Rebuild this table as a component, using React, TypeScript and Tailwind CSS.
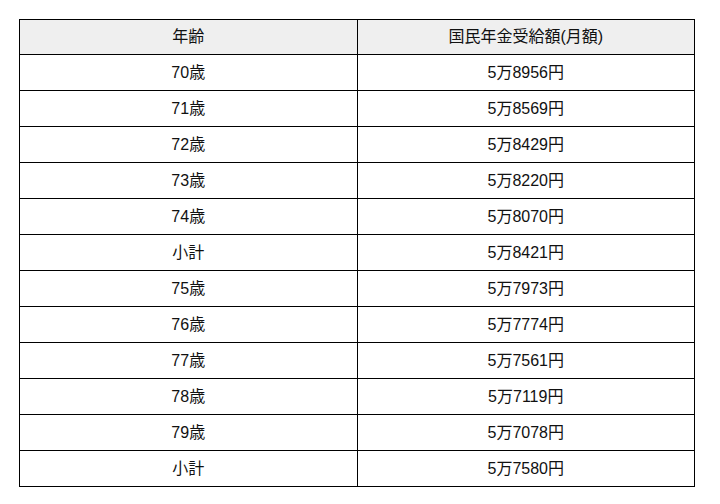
const rows: [string, string][] = [
  ["70歳", "5万8956円"],
  ["71歳", "5万8569円"],
  ["72歳", "5万8429円"],
  ["73歳", "5万8220円"],
  ["74歳", "5万8070円"],
  ["小計", "5万8421円"],
  ["75歳", "5万7973円"],
  ["76歳", "5万7774円"],
  ["77歳", "5万7561円"],
  ["78歳", "5万7119円"],
  ["79歳", "5万7078円"],
  ["小計", "5万7580円"],
];

export default function App() {
  return (
    <div
      className="w-[720px] h-[504px] bg-white pt-[19px] pl-[19px]"
      style={{ fontFamily: '"Liberation Sans", "Noto Sans CJK JP", sans-serif' }}
    >
      <table className="w-[676px] border-collapse table-fixed text-[16px] leading-none text-[#111]">
        <thead>
          <tr className="bg-[#efefef] h-[35px]">
            <th className="border border-black font-normal text-center p-0">年齢</th>
            <th className="border border-black font-normal text-center p-0">国民年金受給額(月額)</th>
          </tr>
        </thead>
        <tbody>
          {rows.map(([age, amount], i) => (
            <tr key={i} className="h-[36px]">
              <td className="border border-black text-center p-0">{age}</td>
              <td className="border border-black text-center p-0">{amount}</td>
            </tr>
          ))}
        </tbody>
      </table>
    </div>
  );
}
